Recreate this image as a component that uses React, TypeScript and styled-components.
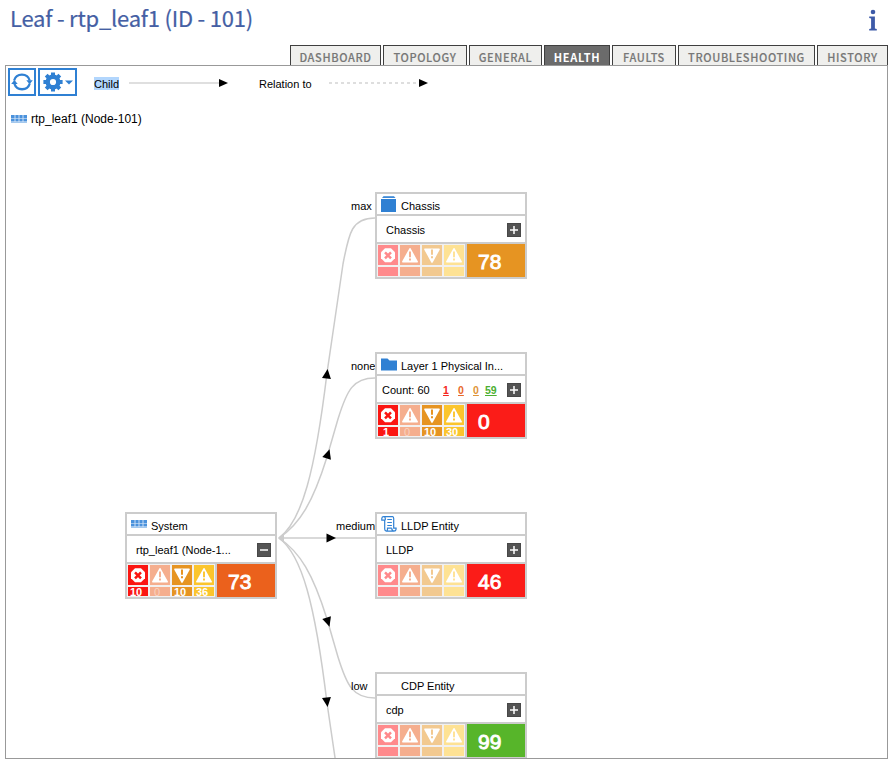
import React from "react";
import styled, { createGlobalStyle, css } from "styled-components";

const GlobalStyle = createGlobalStyle`
  * { box-sizing: border-box; }
  html, body { margin: 0; padding: 0; background: #fff; overflow: hidden; }
  body { font-family: "Liberation Sans", Arial, sans-serif; font-size: 11px; color: #000; }
`;

const CANVAS = { x: 6, y: 66, width: 881, height: 692 };
const BLUE = "#2f80d3";
const LINE = "#cccccc";

const Page = styled.main`
  width: 890px;
  height: 759px;
  display: flex;
  flex-direction: column;
`;

const TitleBar = styled.header`
  height: 45px;
  flex: none;
  display: flex;
  justify-content: space-between;
  padding: 0 12px 0 10px;
  color: #455fa4;
`;

const Title = styled.h1`
  margin: 0;
  font: 400 22px/35px "Noto Sans CJK SC", "Noto Sans", sans-serif;
  letter-spacing: -0.21px;
  -webkit-text-stroke: 0.2px #455fa4;
  white-space: nowrap;
`;

const InfoIcon = styled.svg`
  width: 10px;
  height: 22px;
  margin-top: 9px;
`;

const Tabs = styled.nav`
  height: 20px;
  flex: none;
  display: flex;
  justify-content: flex-end;
  gap: 2px;
  padding-right: 2px;
`;

const Tab = styled.button<{ $width: number; $active?: boolean }>`
  width: ${(p) => p.$width}px;
  height: 20px;
  padding: 3px 0 0 0;
  border: 1px solid #3f3f3f;
  border-bottom: 0;
  background: ${(p) => (p.$active ? "#6b6b6b" : "#efefed")};
  color: ${(p) => (p.$active ? "#fff" : "#777")};
  font: ${(p) => (p.$active ? 700 : 500)} 11px/16px "Noto Sans CJK SC", "Noto Sans", sans-serif;
  letter-spacing: ${(p) => (p.$active ? 0.75 : 0.63)}px;
  -webkit-text-stroke: ${(p) => (p.$active ? "0" : "0.15px #777")};
  white-space: nowrap;
`;

const Panel = styled.section`
  position: relative;
  width: 883px;
  height: 694px;
  flex: none;
  margin-left: 5px;
  border: 1px solid #999;
  overflow: hidden;
`;

const Toolbar = styled.div`
  display: flex;
  align-items: center;
  height: 32px;
  padding: 0 0 0 2px;
  gap: 2px;
`;

const ToolButton = styled.button<{ $width: number }>`
  width: ${(p) => p.$width}px;
  height: 28px;
  padding: 0;
  border: 2px solid ${BLUE};
  background: #fff;
  display: flex;
  align-items: center;
  justify-content: center;
  gap: 2px;
  svg { display: block; }
`;

const Legend = styled.div`
  display: flex;
  align-items: center;
  padding: 3px 0 0 15px;
`;

const LegendText = styled.span<{ $selected?: boolean; $width: number }>`
  width: ${(p) => p.$width}px;
  height: 13px;
  line-height: 14px;
  white-space: nowrap;
  ${(p) => p.$selected && css`background: #b2d6fd;`}
`;

const LegendLine = styled.svg<{ $right: number; $left: number }>`
  display: block;
  width: 100px;
  height: 10px;
  margin: -2px ${(p) => p.$right}px 0 ${(p) => p.$left}px;
`;

const Root = styled.div`
  display: flex;
  align-items: center;
  gap: 4px;
  height: 20px;
  margin-top: 11px;
  padding-left: 5px;
  font-size: 12px;
`;

const Canvas = styled.div`
  position: absolute;
  inset: 0;
  pointer-events: none;
`;

const Edges = styled.svg`
  display: block;
  width: 100%;
  height: 100%;
`;

const EdgeLabel = styled.span<{ $x: number; $y: number }>`
  position: absolute;
  left: ${(p) => p.$x - CANVAS.x}px;
  top: ${(p) => p.$y - CANVAS.y}px;
  line-height: 14px;
`;

const Card = styled.article<{ $x: number; $y: number }>`
  position: absolute;
  left: ${(p) => p.$x - CANVAS.x}px;
  top: ${(p) => p.$y - CANVAS.y}px;
  width: 152px;
  height: 87px;
  border: 2px solid ${LINE};
  background: #fff;
`;

const CardHead = styled.div`
  height: 22px;
  border-bottom: 2px solid ${LINE};
  display: flex;
  padding-left: 4px;
  font-size: 11px;
  line-height: 25px;
  white-space: nowrap;
`;

const CardIcon = styled.div`
  width: 20px;
  flex: none;
  svg { display: block; }
`;

const CardBody = styled.div`
  height: 28px;
  border-bottom: 2px solid ${LINE};
  display: flex;
  align-items: center;
  padding: 1px 4px 0 5px;
  line-height: 14px;
  white-space: nowrap;
`;

const Name = styled.span`
  flex: 1;
  padding: 1px 0 0 4px;
`;

const CountLabel = styled.span`
  width: 61px;
  padding-top: 1px;
`;

const Count = styled.span<{ $color: string; $width: number }>`
  width: ${(p) => p.$width}px;
  color: ${(p) => p.$color};
  font-size: 10.5px;
  font-weight: 700;
  text-decoration: underline;
  padding-top: 1px;
`;

const Toggle = styled.span`
  width: 14px;
  height: 14px;
  flex: none;
  margin: 1px 0 0 auto;
  background: #545454;
  border: 1px solid #484848;
  svg { display: block; }
`;

const CardFoot = styled.div`
  height: 33px;
  display: flex;
`;

const Severities = styled.div`
  width: 88px;
  display: grid;
  grid-template-columns: repeat(4, 20px);
  grid-template-rows: 20px 9px;
  gap: 2px;
  padding: 1px 0 0 1px;
  background: #f2f0ef;
`;

const Cell = styled.div<{ $color: string }>`
  background: ${(p) => p.$color};
  svg { display: block; }
`;

const CellCount = styled.div<{ $color: string; $dim?: boolean }>`
  background: ${(p) => p.$color};
  color: ${(p) => (p.$dim ? "#fad2bf" : "#fff")};
  font-size: 11px;
  font-weight: ${(p) => (p.$dim ? 400 : 700)};
  line-height: 11px;
  padding-left: 2px;
  text-indent: ${(p) => (p.$dim ? 2 : 0)}px;
`;

const Score = styled.div<{ $color: string }>`
  flex: 1;
  background: ${(p) => p.$color};
  border-left: 2px solid ${LINE};
  color: #fff;
  font-size: 21px;
  -webkit-text-stroke: 0.9px #fff;
  line-height: 35px;
  padding-left: 11px;
`;

const BRIGHT = ["#fb1612", "#f5ae8e", "#e69422", "#fbc52d"];
const FADED = ["#ff8a8c", "#f5ae8e", "#f2c990", "#fee294"];

function SeverityIcon({ index, color }: { index: number; color: string }) {
  return (
    <svg width="20" height="20" viewBox="0 0 20 20">
      {index === 0 && (
        <>
          <path d="M7 3.300h6l4 4v6l-4 4H7l-4-4v-6z" fill="#fff" />
          <path d="M7 7.300l6 6M13 7.300l-6 6" stroke={color} strokeWidth="2.500" />
        </>
      )}
      {(index === 1 || index === 3) && (
        <>
          <path d="M10 3.800L17.200 16.800H2.800z" fill="#fff" stroke="#fff" strokeWidth="1.600" strokeLinejoin="round" />
          <path d="M10 6.500v5.800M10 13.600v2" stroke={color} strokeWidth="1.900" />
        </>
      )}
      {index === 2 && (
        <>
          <path d="M3 4.300h14l-7 12.700z" fill="#fff" stroke="#fff" strokeWidth="1.600" strokeLinejoin="round" />
          <path d="M10 4.600v5.200M10 11.200v2" stroke={color} strokeWidth="2" />
        </>
      )}
    </svg>
  );
}

function RackIcon() {
  return (
    <svg width="16" height="8" viewBox="0 0 16 8">
      <rect width="16" height="7.500" fill="#4b92dc" />
      <path d="M0 3.500h16M0 6.500h16" stroke="#b5d2f1" strokeWidth=".8" />
      <path d="M4 0v7M8 0v7M12 0v7" stroke="#d7e7f8" strokeWidth=".9" />
    </svg>
  );
}

type IconKind = "rack" | "box" | "folder" | "scroll" | "none";

function NodeIcon({ kind }: { kind: IconKind }) {
  if (kind === "none") return null;
  return (
    <svg width="18" height="20" viewBox="0 0 18 20">
      {kind === "rack" && (
        <svg y="6" width="16" height="8"><RackIcon /></svg>
      )}
      {kind === "box" && (
        <>
          <path d="M0 5h15v13H0z" fill={BLUE} />
          <path d="M2.500 2.200h10.500l1.500 1.900H1z" fill={BLUE} />
          <path d="M0 4.400h15" stroke="#fff" strokeWidth=".7" />
        </>
      )}
      {kind === "folder" && <path d="M0 4.500h6.500l2 2H16v10H0z" fill={BLUE} />}
      {kind === "scroll" && (
        <g fill="none" stroke={BLUE}>
          <path d="M2.600 2.600h8.900q1.200.2 1.200 1.800v9.800h2.400v.9q-.2 2-2.200 2H5.200q-1.500-.3-1.500-2V6.200H.8V4.500q.1-1.900 1.800-1.900 1.700 0 1.700 1.800v1.800M10.800 14.200H6.500v1q0 1.900-1.300 1.900M10.800 14.200q0 2.600 2.100 2.900" strokeWidth="1.200" />
          <path d="M6.300 5.500h4.600M6.300 8.500h4.600M6.300 11.500h4.600" />
        </g>
      )}
    </svg>
  );
}

interface NodeData {
  x: number;
  y: number;
  title: string;
  name?: string;
  icon: IconKind;
  score: number;
  color: string;
  counts?: number[];
  expanded?: boolean;
}

const NODES: NodeData[] = [
  { x: 375, y: 192, title: "Chassis", name: "Chassis", icon: "box", score: 78, color: "#e69422" },
  { x: 375, y: 352, title: "Layer 1 Physical In...", icon: "folder", score: 0, color: "#fb1c18", counts: [1, 0, 10, 30] },
  { x: 125, y: 512, title: "System", name: "rtp_leaf1 (Node-1...", icon: "rack", score: 73, color: "#eb611c", counts: [10, 0, 10, 36], expanded: true },
  { x: 375, y: 512, title: "LLDP Entity", name: "LLDP", icon: "scroll", score: 46, color: "#fb1c18" },
  { x: 375, y: 672, title: "CDP Entity", name: "cdp", icon: "none", score: 99, color: "#57b52a" },
];

function HealthCard({ node }: { node: NodeData }) {
  const colors = node.counts ? BRIGHT : FADED;
  return (
    <Card $x={node.x} $y={node.y}>
      <CardHead>
        <CardIcon><NodeIcon kind={node.icon} /></CardIcon>
        {node.title}
      </CardHead>
      <CardBody>
        {node.name ? (
          <Name>{node.name}</Name>
        ) : (
          <>
            <CountLabel>Count: 60</CountLabel>
            <Count $width={15} $color="#f52620">1</Count>
            <Count $width={15} $color="#e8682c">0</Count>
            <Count $width={12} $color="#df9438">0</Count>
            <Count $width={14} $color="#4caf32">59</Count>
          </>
        )}
        <Toggle>
          <svg width="12" height="12" viewBox="0 0 12 12">
            <path d={node.expanded ? "M2 6h8" : "M2 6h8M6 2v8"} stroke="#fff" strokeWidth="1.500" />
          </svg>
        </Toggle>
      </CardBody>
      <CardFoot>
        <Severities>
          {colors.map((c, i) => (
            <Cell key={i} $color={c}><SeverityIcon index={i} color={c} /></Cell>
          ))}
          {colors.map((c, i) => (
            <CellCount key={i} $color={c} $dim={i === 1}>
              {node.counts ? (node.counts[i] === 1 ? "\u00a01" : node.counts[i]) : ""}
            </CellCount>
          ))}
        </Severities>
        <Score $color={node.color}>{node.score}</Score>
      </CardFoot>
    </Card>
  );
}

const FAR = "M279 538C302 521 315 472 327 373L343 264C349 232 352 218 375 218";
const NEAR = "M279 538C300 524 313 502 327 457L338 419C347 390 353 378 375 378";
const ARROW = "M5 0L-4.5 -4.5V4.5Z";

const TABS: [string, number][] = [
  ["DASHBOARD", 91],
  ["TOPOLOGY", 84],
  ["GENERAL", 73],
  ["HEALTH", 66],
  ["FAULTS", 64],
  ["TROUBLESHOOTING", 137],
  ["HISTORY", 71],
];

export default function App() {
  return (
    <>
      <GlobalStyle />
      <Page>
        <TitleBar>
          <Title>Leaf - rtp_leaf1 (ID - 101)</Title>
          <InfoIcon viewBox="0 0 10 22" fill="#3d5aa8">
            <circle cx="5" cy="3" r="2.300" />
            <path d="M1.200 7.500h5.700v12l1.900.6V21.400H1.200v-1.300l1.900-.6V9.500l-1.900-.5z" />
          </InfoIcon>
        </TitleBar>
        <Tabs>
          {TABS.map(([label, width]) => (
            <Tab key={label} $width={width} $active={label === "HEALTH"}>{label}</Tab>
          ))}
        </Tabs>
        <Panel>
          <Toolbar>
            <ToolButton $width={28} aria-label="Refresh">
              <svg width="22" height="20" viewBox="0 0 22 20" fill="none" stroke={BLUE} strokeWidth="2.300">
                <path d="M3.100 8.500A8.100 8.100 0 0 1 18.700 8.500M18.800 11.500A8.100 8.100 0 0 1 3.300 11.500" />
                <path d="M15.300 8.300h6.500l-3.200 3.900zM6.700 12H.2l3.200-3.900z" fill={BLUE} stroke="none" />
              </svg>
            </ToolButton>
            <ToolButton $width={39} aria-label="Settings">
              <svg width="20" height="20" viewBox="0 0 20 20" fill="none" stroke={BLUE}>
                <circle cx="10" cy="10" r="5.300" strokeWidth="4.400" />
                <path
                  d="M10 .4v3M10 16.600v3M.4 10h3M16.600 10h3M3.200 3.200l2.200 2.200M14.600 14.600l2.200 2.200M3.200 16.800l2.200-2.200M14.600 5.400l2.200-2.200"
                  strokeWidth="4"
                />
              </svg>
              <svg width="8" height="5" viewBox="0 0 8 5"><path d="M0 .5h8L4 4.500z" fill={BLUE} /></svg>
            </ToolButton>
            <Legend>
              <LegendText $selected $width={25}>Child</LegendText>
              <LegendLine $left={10} $right={30} viewBox="0 0 100 10">
                <path d="M0 5h92" stroke="#d4d4d4" strokeWidth="1.600" />
                <path d="M90 1v8l9-4z" />
              </LegendLine>
              <LegendText $width={54}>Relation to</LegendText>
              <LegendLine $left={16} $right={0} viewBox="0 0 100 10">
                <path d="M0 5h90" stroke="#d4d4d4" strokeWidth="1.600" strokeDasharray="3 3" />
                <path d="M90 1v8l9-4z" />
              </LegendLine>
            </Legend>
          </Toolbar>
          <Root><RackIcon />rtp_leaf1 (Node-101)</Root>
          <Canvas>
            <Edges viewBox={`${CANVAS.x} ${CANVAS.y} ${CANVAS.width} ${CANVAS.height}`}>
              <g fill="none" stroke={LINE} strokeWidth="1.500">
                <path d={FAR} />
                <path d={NEAR} />
                <path d="M279 538H375" />
                <path d={NEAR} transform="translate(0 1076) scale(1 -1)" />
                <path d={FAR} transform="translate(0 1076) scale(1 -1)" />
              </g>
              <path d="M278 538l6-5v10z" fill={LINE} />
              <path d={ARROW} transform="translate(327 374) rotate(-83)" />
              <path d={ARROW} transform="translate(328 454) rotate(-72)" />
              <path d={ARROW} transform="translate(331 538)" />
              <path d={ARROW} transform="translate(328 622) rotate(72)" />
              <path d={ARROW} transform="translate(327 702) rotate(83)" />
            </Edges>
            <EdgeLabel $x={351} $y={199}>max</EdgeLabel>
            <EdgeLabel $x={351} $y={359}>none</EdgeLabel>
            <EdgeLabel $x={336} $y={519}>medium</EdgeLabel>
            <EdgeLabel $x={351} $y={679}>low</EdgeLabel>
            {NODES.map((node) => (
              <HealthCard key={node.title} node={node} />
            ))}
          </Canvas>
        </Panel>
      </Page>
    </>
  );
}
